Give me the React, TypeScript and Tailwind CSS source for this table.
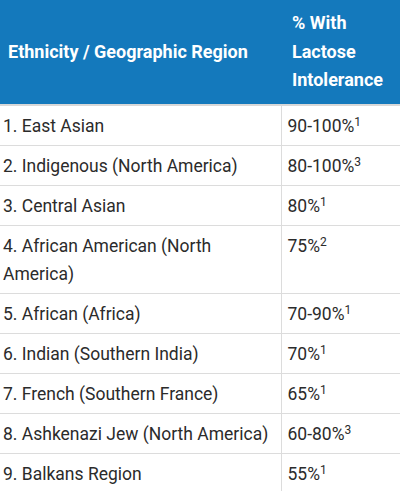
const rows: [string, string, string][] = [
  ['1. East Asian', '90-100%', '1'],
  ['2. Indigenous (North America)', '80-100%', '3'],
  ['3. Central Asian', '80%', '1'],
  ['4. African American (North America)', '75%', '2'],
  ['5. African (Africa)', '70-90%', '1'],
  ['6. Indian (Southern India)', '70%', '1'],
  ['7. French (Southern France)', '65%', '1'],
  ['8. Ashkenazi Jew (North America)', '60-80%', '3'],
  ['9. Balkans Region', '55%', '1'],
];

export default function App() {
  return (
    <div className="w-[400px] h-[491px] overflow-hidden bg-white font-['Roboto',sans-serif]">
      <table className="ml-[-3px] w-[412px] border-collapse text-[17.5px] text-[#2b2b2b]">
        <thead>
          <tr className="bg-[#1479bc] text-white border-b-2 border-[#d8d8d8]">
            <th className="w-[284px] px-[11px] py-[9px] text-left align-middle text-[18px] font-bold leading-[28.5px]">
              Ethnicity / Geographic Region
            </th>
            <th className="px-[11px] py-[9px] text-left align-middle text-[18px] font-bold leading-[28.5px]">
              % With
              <br />
              Lactose
              <br />
              Intolerance
            </th>
          </tr>
        </thead>
        <tbody>
          {rows.map(([name, pct, note]) => (
            <tr key={name} className="border-b border-[#dcdcdc]">
              <td className="border-r border-[#dcdcdc] px-[6px] pt-[6px] pb-[5px] align-top leading-[28px]">
                {name}
              </td>
              <td className="px-[6px] pt-[6px] pb-[5px] align-top leading-[28px]">
                {pct}
                <sup className="text-[12px] leading-none">{note}</sup>
              </td>
            </tr>
          ))}
        </tbody>
      </table>
    </div>
  );
}
